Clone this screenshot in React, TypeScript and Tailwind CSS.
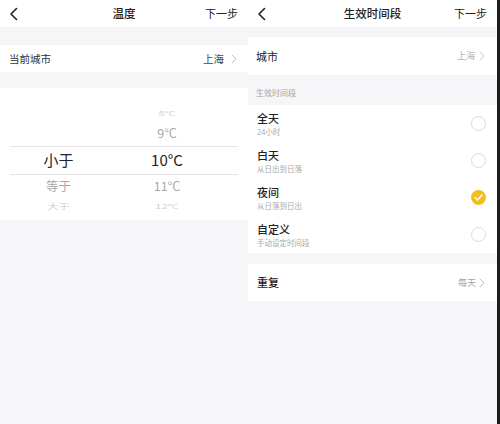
import React from "react";

const font = { fontFamily: '"Noto Sans CJK SC", "Noto Sans", sans-serif' };

function Back() {
  return (
    <svg width="10" height="14" viewBox="0 0 10 14" fill="none">
      <path d="M7.5 1.5 L2 7 L7.5 12.5" stroke="#222" strokeWidth="1.6" strokeLinecap="round" strokeLinejoin="round" />
    </svg>
  );
}

function Chevron({ color = "#c4c4c4" }: { color?: string }) {
  return (
    <svg width="6" height="10" viewBox="0 0 6 10" fill="none">
      <path d="M1 1 L5 5 L1 9" stroke={color} strokeWidth="1" strokeLinecap="round" strokeLinejoin="round" />
    </svg>
  );
}

function Header({ title }: { title: string }) {
  return (
    <div className="h-[27px] bg-white flex items-center justify-between pl-[9px] pr-[10px] relative">
      <Back />
      <div className="absolute left-0 right-0 text-center text-[11.5px] text-[#222] font-medium pointer-events-none">{title}</div>
      <div className="text-[11px] text-[#222]">下一步</div>
    </div>
  );
}

function Radio({ checked }: { checked?: boolean }) {
  if (checked)
    return (
      <div className="w-[15px] h-[15px] rounded-full bg-[#f3bd22] flex items-center justify-center">
        <svg width="9" height="7" viewBox="0 0 9 7" fill="none">
          <path d="M1 3.5 L3.5 6 L8 1" stroke="#fff" strokeWidth="1.4" strokeLinecap="round" strokeLinejoin="round" />
        </svg>
      </div>
    );
  return <div className="w-[15px] h-[15px] rounded-full border border-[#dcdcdc] bg-white" />;
}

function Option({ title, sub, checked }: { title: string; sub: string; checked?: boolean }) {
  return (
    <div className="h-[37px] flex items-center justify-between pl-[9px] pr-[11px]">
      <div className="flex flex-col">
        <div className="text-[11px] leading-[16px] text-[#222] font-medium">{title}</div>
        <div className="text-[7.5px] leading-[11px] text-[#aaa]">{sub}</div>
      </div>
      <Radio checked={checked} />
    </div>
  );
}

function PickerRow({ h, left, right, size, color, scale }: { h: number; left?: string; right: string; size: string; color: string; scale?: boolean }) {
  return (
    <div className="flex items-center" style={{ height: h }}>
      <div className={`w-[117px] text-center ${size} ${color} ${scale ? "scale-y-[0.6]" : ""}`}>{left}</div>
      <div className={`w-[100px] text-center ${size} ${color} ${scale ? "scale-y-[0.6]" : ""}`}>{right}</div>
    </div>
  );
}

export default function App() {
  return (
    <div className="w-[500px] h-[424px] flex bg-[#f6f6f8] overflow-hidden" style={font}>
      {/* Left panel */}
      <div className="w-[248px] h-full flex flex-col bg-[#f6f6f8]">
        <Header title="温度" />
        <div className="h-[18px]" />
        <div className="h-[27px] bg-white flex items-center justify-between pl-[9px] pr-[11px]">
          <div className="text-[10.5px] text-[#333]">当前城市</div>
          <div className="flex items-center gap-[7px]">
            <span className="text-[10.5px] text-[#444]">上海</span>
            <Chevron />
          </div>
        </div>
        <div className="h-[16px]" />
        <div className="h-[132px] bg-white flex flex-col">
          <div className="h-[18px]" />
          <PickerRow h={15} right="8°C" size="text-[11px]" color="text-[#cfcfcf]" scale />
          <PickerRow h={25} right="9°C" size="text-[12.5px]" color="text-[#a8a8a8]" />
          <div className="mx-[10px] border-t border-[#e6e6e6]" />
          <PickerRow h={27} left="小于" right="10°C" size="text-[15px]" color="text-[#222]" />
          <div className="mx-[10px] border-t border-[#e6e6e6]" />
          <PickerRow h={23} left="等于" right="11°C" size="text-[12.5px]" color="text-[#a8a8a8]" />
          <PickerRow h={16} left="大于" right="12°C" size="text-[11px]" color="text-[#cfcfcf]" scale />
        </div>
      </div>
      {/* Right panel */}
      <div className="w-[249px] h-full flex flex-col bg-[#f6f6f8]">
        <Header title="生效时间段" />
        <div className="h-[10px]" />
        <div className="h-[38px] bg-white flex items-center justify-between pl-[8px] pr-[12px]">
          <div className="text-[11px] text-[#222]">城市</div>
          <div className="flex items-center gap-[4px]">
            <span className="text-[9px] text-[#b5b5b5]">上海</span>
            <Chevron />
          </div>
        </div>
        <div className="h-[30px] flex items-center pl-[8px] pt-[5px]">
          <span className="text-[8px] text-[#a5a5a5]">生效时间段</span>
        </div>
        <div className="bg-white flex flex-col">
          <Option title="全天" sub="24小时" />
          <Option title="白天" sub="从日出到日落" />
          <Option title="夜间" sub="从日落到日出" checked />
          <Option title="自定义" sub="手动设定时间段" />
        </div>
        <div className="h-[11px]" />
        <div className="h-[37px] bg-white flex items-center justify-between pl-[9px] pr-[12px]">
          <div className="text-[11px] text-[#222] font-medium">重复</div>
          <div className="flex items-center gap-[3px]">
            <span className="text-[9px] text-[#a5a5a5]">每天</span>
            <Chevron />
          </div>
        </div>
      </div>
      <div className="w-[3px] h-full bg-[#1c1c1c]" />
    </div>
  );
}
